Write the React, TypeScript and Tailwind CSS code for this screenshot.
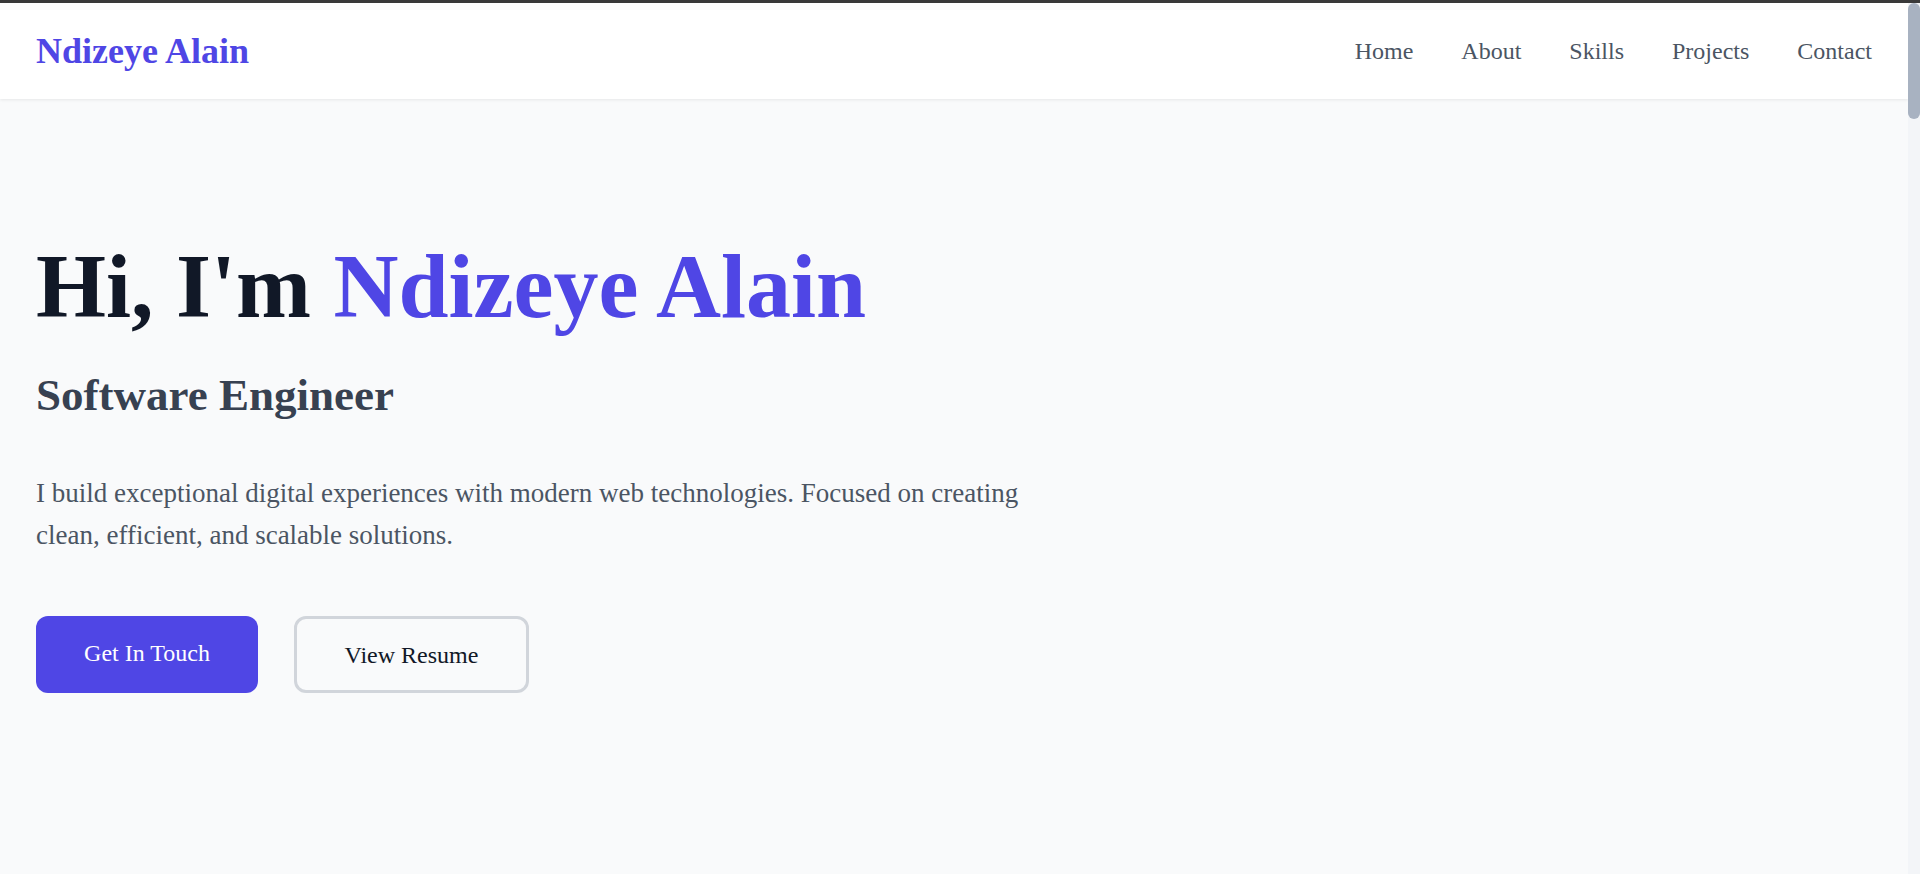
import React from "react";

export default function App() {
  const links = ["Home", "About", "Skills", "Projects", "Contact"];
  return (
    <div className="h-screen flex flex-col font-['Liberation_Serif','Times_New_Roman',serif]">
      <div className="h-[3px] shrink-0 bg-[#3a3a3a]" />
      <div className="flex flex-1 min-h-0">
        <div className="flex-1 min-w-0 overflow-hidden bg-[#f9fafb]">
          <header className="h-[96px] bg-white shadow-[0_1px_3px_rgba(0,0,0,0.08)] px-[36px] flex items-center justify-between relative z-10">
            <a className="text-[36px] leading-[48px] font-bold text-[#4f46e5]">Ndizeye Alain</a>
            <nav className="flex items-center gap-[48px]">
              {links.map((l) => (
                <a key={l} className="text-[24px] leading-[36px] text-[#4b5563]">
                  {l}
                </a>
              ))}
            </nav>
          </header>
          <main>
            <section id="home" className="px-[36px] pt-[143px] h-[778px]">
              <h1 className="text-[90px] leading-[90px] font-bold text-[#111827]">
                Hi, I'm <span className="text-[#4f46e5]">Ndizeye Alain</span>
              </h1>
              <h2 className="mt-[36px] text-[45px] leading-[54px] font-bold text-[#374151]">Software Engineer</h2>
              <p className="mt-[50px] max-w-[1008px] text-[27px] leading-[42px] text-[#4b5563]">
                I build exceptional digital experiences with modern web technologies. Focused on creating clean, efficient, and
                scalable solutions.
              </p>
              <div className="mt-[60px] flex items-center gap-[36px]">
                <a className="w-[222px] h-[77px] rounded-[12px] bg-[#4f46e5] text-white text-[24px] leading-[36px] flex items-center justify-center pb-[4px]">
                  Get In Touch
                </a>
                <a className="w-[235px] h-[77px] rounded-[12px] border-[3px] border-[#d1d5db] text-[#111827] text-[24px] leading-[36px] flex items-center justify-center">
                  View Resume
                </a>
              </div>
            </section>
          </main>
        </div>
        <div className="w-[12px] shrink-0 bg-[#f3f5f8]">
          <div className="h-[116px] rounded-full bg-[#a8b2c1]" />
        </div>
      </div>
    </div>
  );
}
